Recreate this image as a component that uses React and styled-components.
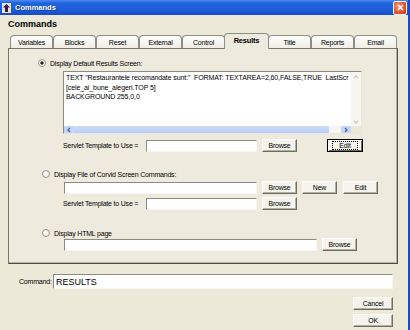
import React from "react";
import styled, { createGlobalStyle, css } from "styled-components";

const GlobalStyle = createGlobalStyle`
  html, body {
    margin: 0;
    padding: 0;
    background: #ece9d8;
  }
  body {
    font-family: "Liberation Sans", Arial, sans-serif;
    color: #000;
  }
`;

const Window = styled.div`
  width: 410px;
  height: 330px;
  box-sizing: border-box;
  background: #ece9d8;
  border-right: 2px solid #1c47d6;
  display: flex;
  flex-direction: column;
  overflow: hidden;
`;

const TitleBar = styled.div`
  height: 15px;
  flex: none;
  display: flex;
  align-items: center;
  gap: 4px;
  padding: 0 1px 0 2px;
  background: linear-gradient(#4a8cf2, #2163de 20%, #1c5bd8 70%, #174bc4);
  color: #fff;
  font: bold 7.5px "Liberation Sans", Arial, sans-serif;
  text-shadow: 1px 1px #0f3a9e;
`;

const CloseButton = styled.div`
  margin-left: auto;
  width: 12px;
  height: 12px;
  border: 1px solid #fff;
  border-radius: 2px;
  background: radial-gradient(circle at 35% 35%, #f0957a, #e2522c 60%, #c8381a);
  display: flex;
  align-items: center;
  justify-content: center;
`;

const Body = styled.div`
  flex: 1;
  display: flex;
  flex-direction: column;
  padding: 0 10px 0 8px;
`;

const Heading = styled.div`
  font: bold 9px "Liberation Sans", Arial, sans-serif;
  line-height: 12px;
  padding-top: 3px;
`;

const TabStrip = styled.div`
  display: flex;
  align-items: flex-end;
  height: 16px;
  margin-top: 3px;
  margin-bottom: -1px;
  padding-left: 2px;
`;

const Tab = styled.div`
  width: 43px;
  height: 14px;
  box-sizing: border-box;
  flex: none;
  display: flex;
  align-items: center;
  justify-content: center;
  border: 1px solid #8c8f88;
  border-bottom: none;
  border-radius: 4px 4px 0 0;
  background: linear-gradient(#fdfdfb, #efede4);
  font-size: 7px;
  letter-spacing: -0.2px;
  padding-bottom: 1px;
  ${(p) =>
    p.$active &&
    css`
      position: relative;
      z-index: 1;
      width: 45px;
      height: 16px;
      margin: 0 -1px;
      background: #eeebde;
      font-weight: bold;
      font-size: 7.5px;
      padding-bottom: 2px;
    `}
`;

const Panel = styled.div`
  height: 216px;
  box-sizing: border-box;
  border: 1px solid #76766e;
  border-right-color: #4e4e48;
  border-bottom-color: #4e4e48;
  box-shadow: inset -1px -1px #b7b4a6;
  background: #eeebde;
  display: flex;
  flex-direction: column;
`;

const RadioRow = styled.div`
  display: flex;
  align-items: center;
  gap: 4px;
  height: 10px;
  margin-top: ${(p) => p.$top}px;
  margin-left: ${(p) => p.$indent}px;
  font-size: 7px;
  letter-spacing: -0.2px;
`;

const Radio = styled.span`
  width: 8px;
  height: 8px;
  box-sizing: border-box;
  border-radius: 50%;
  border: 1px solid #9a988c;
  background: ${(p) =>
    p.$checked
      ? "radial-gradient(circle, #1e1e1e 0 1.4px, #f6f5f0 1.8px)"
      : "radial-gradient(circle at 40% 40%, #ffffff, #e4e2d6)"};
`;

const Row = styled.div`
  display: flex;
  align-items: center;
  height: 13px;
  margin-top: ${(p) => p.$top}px;
  margin-left: ${(p) => p.$indent}px;
`;

const Label = styled.span`
  width: ${(p) => p.$w}px;
  flex: none;
  white-space: nowrap;
  font-size: 7px;
  letter-spacing: -0.2px;
`;

const Field = styled.input`
  width: ${(p) => p.$w}px;
  height: ${(p) => p.$h || 12}px;
  box-sizing: border-box;
  flex: none;
  margin: 0;
  padding: 0 2px;
  background: #fff;
  border: 1px solid;
  border-color: #8d8b80 #f6f5ef #f6f5ef #8d8b80;
  font: ${(p) => p.$font || "7px"} "Liberation Sans", Arial, sans-serif;
  color: #000;
  outline: none;
`;

const Button = styled.button`
  width: ${(p) => p.$w || 35}px;
  height: 13px;
  box-sizing: border-box;
  flex: none;
  margin: 0 0 0 ${(p) => p.$left || 0}px;
  padding: 0;
  background: #f4f3ec;
  border: 1px solid;
  border-color: #ffffff #6f6d62 #6f6d62 #ffffff;
  box-shadow: inset -1px -1px #b4b1a3;
  font: 7px "Liberation Sans", Arial, sans-serif;
  letter-spacing: -0.2px;
  color: #000;
  display: flex;
  align-items: center;
  justify-content: center;
  ${(p) =>
    p.$focused &&
    css`
      border-color: #000;
      box-shadow: inset 1px 1px #fff, inset -1px -1px #6f6d62;
    `}
`;

const FocusText = styled.span`
  box-sizing: border-box;
  width: 26px;
  height: 9px;
  border: 1px dotted #000;
  display: flex;
  align-items: center;
  justify-content: center;
  font-size: 7px;
  line-height: 7px;
`;

const TextBox = styled.div`
  width: 299px;
  height: 63px;
  box-sizing: border-box;
  margin: 3px 0 0 54px;
  border: 1px solid;
  border-color: #8d8b80 #e9e7dd #e9e7dd #8d8b80;
  background: #fff;
  display: flex;
  flex-direction: column;
`;

const TextTop = styled.div`
  flex: 1;
  display: flex;
  min-height: 0;
`;

const TextContent = styled.div`
  flex: 1;
  overflow: hidden;
  padding: 1px 0 0 2px;
  font-size: 7px;
  line-height: 9.5px;
  letter-spacing: -0.1px;
  white-space: pre;
`;

const VScroll = styled.div`
  width: 10px;
  flex: none;
  background: #f6f5f0;
  display: flex;
  flex-direction: column;
  justify-content: space-between;
`;

const ScrollButton = styled.div`
  width: 10px;
  height: ${(p) => p.$h || 9}px;
  flex: none;
  display: flex;
  align-items: center;
  justify-content: center;
  background: ${(p) => (p.$disabled ? "#f6f5f0" : "#c3d5fb")};
  border-radius: 1px;
`;

const HScroll = styled.div`
  height: 7px;
  flex: none;
  display: flex;
  background: #f4f3ee;
`;

const Thumb = styled.div`
  width: 255px;
  flex: none;
  background: linear-gradient(#cfddfc, #b8cdf6);
  border-radius: 1px;
`;

const Track = styled.div`
  flex: 1;
  background: #f6f5f0;
`;

const Corner = styled.div`
  width: 10px;
  flex: none;
  background: #ece9d8;
`;

const CommandRow = styled.div`
  display: flex;
  align-items: center;
  gap: 3px;
  margin-top: 10px;
  padding-left: 11px;
`;

const Actions = styled.div`
  display: flex;
  flex-direction: column;
  align-items: flex-end;
  gap: 4px;
  margin-top: 8px;
  padding-right: 5px;
`;

const ArrowIcon = ({ dir, color }) => (
  <svg width="6" height="6" viewBox="0 0 6 6">
    <path
      d={
        dir === "left"
          ? "M4 1 L2 3 L4 5"
          : dir === "right"
          ? "M2 1 L4 3 L2 5"
          : dir === "up"
          ? "M1 4 L3 2 L5 4"
          : "M1 2 L3 4 L5 2"
      }
      fill="none"
      stroke={color}
      strokeWidth="1.3"
    />
  </svg>
);

const AppIcon = () => (
  <svg width="9" height="10" viewBox="0 0 9 10">
    <rect x="0" y="0" width="9" height="10" fill="#e9e4cf" />
    <path d="M4.5 1 L8 4.5 L6 4.5 L6 9 L3 9 L3 4.5 L1 4.5 Z" fill="#3a1450" />
  </svg>
);

const CloseIcon = () => (
  <svg width="7" height="7" viewBox="0 0 7 7">
    <path d="M1 1 L6 6 M6 1 L1 6" stroke="#fff" strokeWidth="1.6" />
  </svg>
);

const textLines = [
  'TEXT "Restaurantele recomandate sunt:"  FORMAT: TEXTAREA=2,60,FALSE,TRUE  LastScr',
  "[cele_ai_bune_alegeri.TOP 5]",
  "BACKGROUND 255,0,0",
];

const tabs = ["Variables", "Blocks", "Reset", "External", "Control", "Results", "Title", "Reports", "Email"];

export default function App() {
  return (
    <>
      <GlobalStyle />
      <Window>
        <TitleBar>
          <AppIcon />
          <span>Commands</span>
          <CloseButton>
            <CloseIcon />
          </CloseButton>
        </TitleBar>
        <Body>
          <Heading>Commands</Heading>
          <TabStrip>
            {tabs.map((t) => (
              <Tab key={t} $active={t === "Results"}>
                {t}
              </Tab>
            ))}
          </TabStrip>
          <Panel>
            <RadioRow $top={9} $indent={29}>
              <Radio $checked />
              Display Default Results Screen:
            </RadioRow>
            <TextBox>
              <TextTop>
                <TextContent>{textLines.join("\n")}</TextContent>
                <VScroll>
                  <ScrollButton $disabled>
                    <ArrowIcon dir="up" color="#cfcdc0" />
                  </ScrollButton>
                  <ScrollButton $disabled>
                    <ArrowIcon dir="down" color="#cfcdc0" />
                  </ScrollButton>
                </VScroll>
              </TextTop>
              <HScroll>
                <ScrollButton $h={7}>
                  <ArrowIcon dir="left" color="#4d6185" />
                </ScrollButton>
                <Thumb />
                <Track />
                <ScrollButton $h={7}>
                  <ArrowIcon dir="right" color="#4d6185" />
                </ScrollButton>
                <Corner />
              </HScroll>
            </TextBox>
            <Row $top={5} $indent={54}>
              <Label $w={83}>Servlet Template to Use =</Label>
              <Field $w={111} readOnly value="" />
              <Button $left={5}>Browse</Button>
              <Button $left={30} $w={36} $focused>
                <FocusText>Edit</FocusText>
              </Button>
            </Row>
            <RadioRow $top={17} $indent={33}>
              <Radio />
              Display File of Corvid Screen Commands:
            </RadioRow>
            <Row $top={2} $indent={55}>
              <Field $w={193} readOnly value="" />
              <Button $left={5}>Browse</Button>
              <Button $left={5}>New</Button>
              <Button $left={6}>Edit</Button>
            </Row>
            <Row $top={3} $indent={54}>
              <Label $w={83}>Servlet Template to Use =</Label>
              <Field $w={111} readOnly value="" />
              <Button $left={5}>Browse</Button>
            </Row>
            <RadioRow $top={18} $indent={33}>
              <Radio />
              Display HTML page
            </RadioRow>
            <Row $top={0} $indent={55}>
              <Field $w={253} readOnly value="" />
              <Button $left={5}>Browse</Button>
            </Row>
          </Panel>
          <CommandRow>
            <Label $w={31}>Command:</Label>
            <Field $w={340} $h={15} $font="9px" readOnly value="RESULTS" />
          </CommandRow>
          <Actions>
            <Button $w={40}>Cancel</Button>
            <Button $w={40}>OK</Button>
          </Actions>
        </Body>
      </Window>
    </>
  );
}
